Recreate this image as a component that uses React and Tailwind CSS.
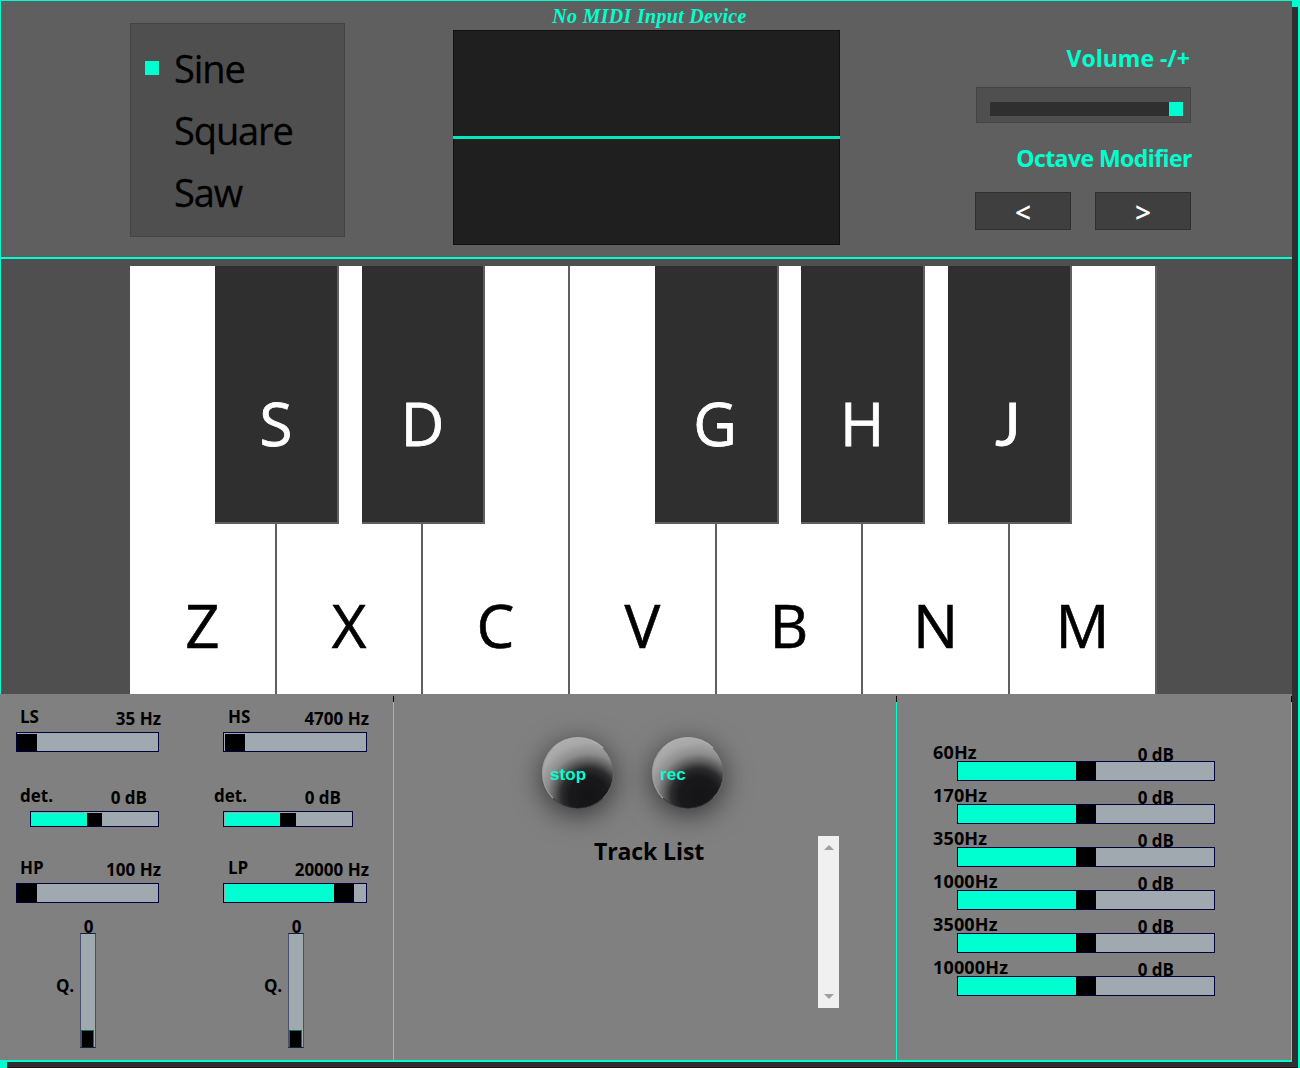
import React from "react";

const WHITE_KEYS = [
  { note: "Z", w: "w-[147px]" },
  { note: "X", w: "w-[146px]" },
  { note: "C", w: "w-[147px]" },
  { note: "V", w: "w-[147px]" },
  { note: "B", w: "w-[146px]" },
  { note: "N", w: "w-[147px]" },
  { note: "M", w: "w-[147px]" },
];

const BLACK_KEYS = [
  { note: "S", cls: "ml-[85px] w-[124px] pr-0" },
  { note: "D", cls: "ml-[23px] w-[123px] pr-0" },
  { note: "G", cls: "ml-[170px] w-[124px] pr-0.5" },
  { note: "H", cls: "ml-[22px] w-[124px] pr-0" },
  { note: "J", cls: "ml-[23px] w-[124px] pr-0.5 font-['Lato']" },
];

const BANDS = ["60Hz", "170Hz", "350Hz", "1000Hz", "3500Hz", "10000Hz"];

function Slider({ size, fill = 0, handle = 20, inset = "" }) {
  return (
    <div className={`flex border border-[#00003c] bg-[#a0a8b0] ${inset} ${size}`}>
      <div className="bg-[#00ffd0]" style={{ width: fill }} />
      <div className="bg-black" style={{ width: handle }} />
    </div>
  );
}

function Control({ header, label, labelCls = "", value, valueCls = "", children }) {
  return (
    <div>
      <div className={`flex justify-between whitespace-nowrap ${header}`}>
        <span className={labelCls}>{label}</span>
        <span className={`mt-0.5 ${valueCls}`}>{value}</span>
      </div>
      {children}
    </div>
  );
}

function QControl() {
  return (
    <div className="flex pt-[11px]">
      <span className="ml-[40px] mt-[60px] w-[24px] tracking-[-0.4px]">Q.</span>
      <div className="flex w-4 flex-col items-center">
        <span className="h-[19px] pl-px pt-px">0</span>
        <div className="flex h-[115px] w-4 flex-col justify-end border border-x-[#48506c] border-y-[#102040] bg-[#a0a8b0]">
          <div className="mr-px h-[17px] border border-b-0 border-[#107060] bg-black" />
        </div>
      </div>
    </div>
  );
}

function Knob({ children }) {
  return (
    <button className="flex h-[72px] w-[72px] items-center rounded-full border border-t-[#b0b0b0] border-l-[#a0a0a0] border-r-[#606060] border-b-[#383838] bg-[radial-gradient(circle_at_65%_82%,#141416_0%,#19191b_26%,#2c2c2e_37%,#606060_47%,#8c8c8c_57%,#a8a8a8_72%,#b8b8b8_100%)] pl-[7px] pt-[3px] text-left font-['Liberation_Sans',sans-serif] text-[17px] font-bold tracking-[0.1px] text-[#00ffd0] shadow-[0_6px_28px_rgba(0,0,0,0.6)]">
      {children}
    </button>
  );
}

function Divider() {
  return (
    <div className="flex w-px flex-col pt-0.5">
      <div className="h-1.5 bg-black" />
      <div className="flex-1 bg-[#00ffd0]" />
    </div>
  );
}

function WaveMenu() {
  return (
    <div className="mt-[22px] h-[214px] w-[215px] border border-[#444444] bg-[#4f4f4f] pt-[13px] text-[38px] text-black">
      {["Sine", "Square", "Saw"].map((name, i) => (
        <div key={name} className="flex h-[62px] items-center pl-[14px]">
          <div className={`mr-[15px] size-[14px] ${i === 0 ? "bg-[#00ffd0]" : ""}`} />
          <span className="tracking-[-1.1px] [-webkit-text-stroke:0.3px_black]">{name}</span>
        </div>
      ))}
    </div>
  );
}

function Header() {
  return (
    <section className="flex h-[259px] border-b-2 border-l border-t border-[#00ffd0] bg-[#5f5f5f] pl-[129px]">
      <WaveMenu />
      <div className="ml-[108px] w-[387px]">
        <div className="h-[29px] pl-1.5 pt-px text-center font-['Liberation_Serif',serif] text-[20px] font-bold italic leading-[28px] tracking-[0.3px] text-[#00ffd0]">
          No MIDI Input Device
        </div>
        <div className="flex h-[215px] items-center border border-[#111111] bg-[#1f1f1f]">
          <div className="-mx-px h-[3px] flex-1 bg-[#00e8bd]" />
        </div>
      </div>
      <div className="ml-[135px] w-[216px] pt-[42px] text-right text-[23px] font-bold leading-[30px] text-[#00ffd0]">
        <div className="pr-px">Volume -/+</div>
        <div className="ml-px mt-[14px] flex h-9 border border-[#444444] bg-[#4f4f4f] pl-[13px] pt-[14px]">
          <div className="h-[14px] w-[179px] bg-[#2f2f2f]" />
          <div className="size-[14px] bg-[#00ffd0]" />
        </div>
        <div className="-mr-px mt-5 whitespace-nowrap tracking-[-0.55px]">Octave Modifier</div>
        <div className="mt-[19px] flex gap-6 text-[28px] font-semibold text-white">
          <button className="h-[38px] w-24 border border-[#2f2f2f] bg-[#3f3f3f] pt-px">&lt;</button>
          <button className="h-[38px] w-24 border border-[#2f2f2f] bg-[#3f3f3f] pt-px">&gt;</button>
        </div>
      </div>
    </section>
  );
}

function Keyboard() {
  return (
    <section className="h-[435px] border-l border-[#00ffd0] bg-[#4f4f4f] pl-[129px] pt-[7px] text-[60px] leading-none">
      <div className="relative flex h-[428px] w-[1027px]">
        {WHITE_KEYS.map((k) => (
          <div key={k.note} className={`flex items-end justify-center border-r-2 border-[#5f5f5f] bg-white pb-[39px] text-black [-webkit-text-stroke:0.6px_black] ${k.w}`}>
            {k.note}
          </div>
        ))}
        <div className="absolute inset-x-0 top-0 flex">
          {BLACK_KEYS.map((k) => (
            <div key={k.note} className={`flex h-[258px] items-end justify-center border-b-2 border-r-2 border-[#5f5f5f] bg-[#2f2f2f] pb-[69px] text-white [-webkit-text-stroke:0.8px_white] ${k.cls}`}>
              {k.note}
            </div>
          ))}
        </div>
      </div>
    </section>
  );
}

function FilterPanel() {
  return (
    <div className="flex w-[393px]">
      <div className="ml-4 w-[143px]">
        <Control header="h-[38px] pt-[11px]" label="LS" labelCls="ml-1" value="35 Hz" valueCls="-mr-0.5">
          <Slider size="h-5" inset="pt-px" />
        </Control>
        <Control header="h-[59px] pt-[32px]" label="det." labelCls="ml-1" value="0 dB" valueCls="mr-3">
          <Slider size="ml-[14px] h-4" inset="pt-px" fill={56} handle={15} />
        </Control>
        <Control header="h-[56px] pt-[29px]" label="HP" labelCls="ml-1" value="100 Hz" valueCls="-mr-0.5">
          <Slider size="h-5" />
        </Control>
        <QControl />
      </div>
      <div className="ml-[64px] w-[144px]">
        <Control header="h-[38px] pt-[11px]" label="HS" labelCls="ml-[5px]" value="4700 Hz" valueCls="-mr-0.5">
          <Slider size="h-5" inset="pl-px pt-px" />
        </Control>
        <Control header="h-[59px] pt-[32px]" label="det." labelCls="-ml-[9px]" value="0 dB" valueCls="mr-[26px]">
          <Slider size="h-4 w-[130px]" inset="pl-px pt-px" fill={55} handle={16} />
        </Control>
        <Control header="h-[56px] pt-[29px]" label="LP" labelCls="ml-[5px]" value="20000 Hz" valueCls="-mr-0.5">
          <Slider size="h-5" inset="pl-px" fill={109} />
        </Control>
        <div className="ml-px">
          <QControl />
        </div>
      </div>
    </div>
  );
}

function RecorderPanel() {
  return (
    <div className="w-[502px] pt-[43px]">
      <div className="ml-[148px] flex gap-[38px]">
        <Knob>stop</Knob>
        <Knob>rec</Knob>
      </div>
      <div className="mt-[27px] flex">
        <h2 className="ml-[200px] w-[224px] text-[23px] font-bold leading-[30px] tracking-[-0.1px]">Track List</h2>
        <div className="flex h-[172px] w-[21px] flex-col items-center justify-between bg-[#f0f0f0] py-[9px]">
          <svg width="10" height="5" viewBox="0 0 10 5" fill="#a0a0a0">
            <path d="M0 5L5 0L10 5Z" />
          </svg>
          <svg width="10" height="5" viewBox="0 0 10 5" fill="#a0a0a0">
            <path d="M0 0L5 5L10 0Z" />
          </svg>
        </div>
      </div>
    </div>
  );
}

function EqualizerPanel() {
  return (
    <div className="w-[394px] pt-[44px]">
      {BANDS.map((band) => (
        <div key={band} className="ml-9 w-[282px]">
          <Control header="h-[23px] pt-[3px]" label={band} labelCls="-mt-px text-[18px] tracking-[0.15px]" value="0 dB" valueCls="mr-[41px]">
            <Slider size="relative ml-6 h-5" fill={118} />
          </Control>
        </div>
      ))}
    </div>
  );
}

export default function App() {
  return (
    <div className="h-[1068px] w-[1300px] overflow-hidden bg-[#2f2f2f] font-['Open_Sans','Noto_Sans',sans-serif]">
      <div className="flex h-[1062px]">
        <main className="w-[1292px]">
          <Header />
          <Keyboard />
          <section className="flex h-[368px] border-b-2 border-[#00ffd0] bg-[#808080] text-[17px] font-bold leading-6 text-black">
            <FilterPanel />
            <Divider />
            <RecorderPanel />
            <Divider />
            <EqualizerPanel />
            <Divider />
          </section>
        </main>
        <div className="w-2 border-r-2 border-t-[7px] border-[#00ffd0]" />
      </div>
      <div className="flex h-1.5">
        <div className="w-[7px] bg-[#00ffd0]" />
        <div className="flex-1 border-b border-b-[#25101c]" />
        <div className="w-0.5 bg-[#00ffd0]" />
      </div>
    </div>
  );
}
